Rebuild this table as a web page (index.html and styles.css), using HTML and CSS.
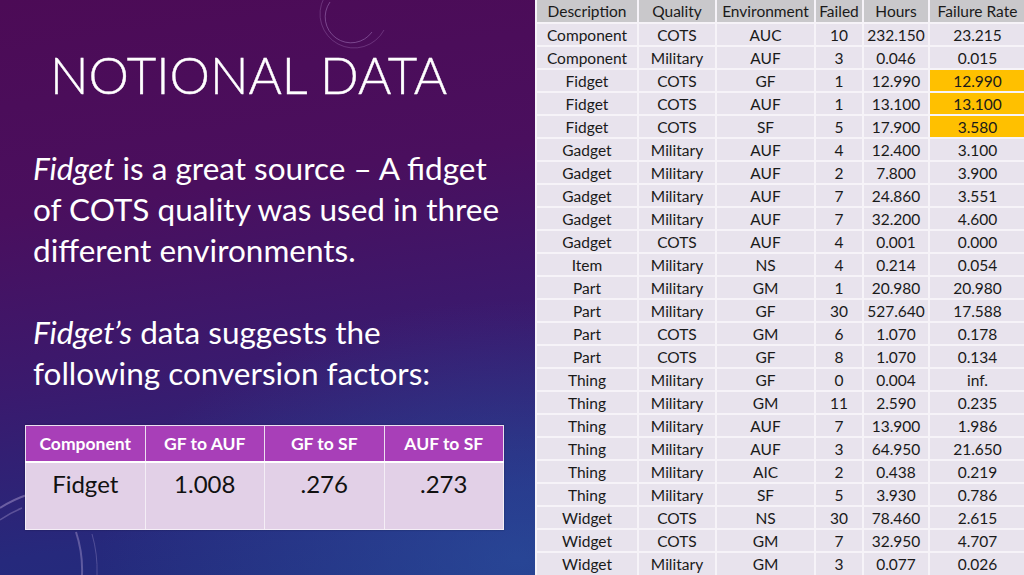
FILE: index.html
```html
<!DOCTYPE html>
<html lang="en">
<head>
<meta charset="utf-8">
<title>Notional Data</title>
<link rel="stylesheet" href="styles.css">
</head>
<body>
<div class="slide">
  <section class="left">
    <svg class="deco" width="535" height="575" viewBox="0 0 535 575">
      <path d="M330 2 A24 24 0 0 0 372 32" fill="none" stroke="#9a6cb0" stroke-width="1" opacity="0.6"/>
      <path d="M324 -2 A30 30 0 0 0 384 30" fill="none" stroke="#9a6cb0" stroke-width="1" opacity="0.4"/>
      <path d="M0 508 A120 120 0 0 1 30 494" fill="none" stroke="#b7a6d8" stroke-width="2" opacity="0.45"/>
      <path d="M0 520 A110 110 0 0 1 22 508" fill="none" stroke="#b7a6d8" stroke-width="1.5" opacity="0.35"/>
      <path d="M76 532 A120 120 0 0 1 82 575" fill="none" stroke="#b7a6d8" stroke-width="2" opacity="0.4"/>
      <path d="M92 534 A130 130 0 0 1 97 575" fill="none" stroke="#b7a6d8" stroke-width="1" opacity="0.3"/>
    </svg>
    <h1 class="title">NOTIONAL DATA</h1>
    <p class="body-text"><em>Fidget</em> is a great source – A fidget of COTS quality was used in three different environments.</p>
    <p class="body-text second"><em>Fidget’s</em> data suggests the following conversion factors:</p>
    <table class="conv">
      <thead>
        <tr><th>Component</th><th>GF to AUF</th><th>GF to SF</th><th>AUF to SF</th></tr>
      </thead>
      <tbody>
        <tr><td>Fidget</td><td>1.008</td><td>.276</td><td>.273</td></tr>
      </tbody>
    </table>
  </section>
  <section class="right">
    <table class="data">
      <colgroup>
        <col class="c1"><col class="c2"><col class="c3"><col class="c4"><col class="c5"><col class="c6">
      </colgroup>
      <thead>
        <tr><th>Description</th><th>Quality</th><th>Environment</th><th>Failed</th><th>Hours</th><th>Failure Rate</th></tr>
      </thead>
      <tbody>
        <tr><td>Component</td><td>COTS</td><td>AUC</td><td>10</td><td>232.150</td><td>23.215</td></tr>
        <tr><td>Component</td><td>Military</td><td>AUF</td><td>3</td><td>0.046</td><td>0.015</td></tr>
        <tr><td>Fidget</td><td>COTS</td><td>GF</td><td>1</td><td>12.990</td><td class="hl">12.990</td></tr>
        <tr><td>Fidget</td><td>COTS</td><td>AUF</td><td>1</td><td>13.100</td><td class="hl">13.100</td></tr>
        <tr><td>Fidget</td><td>COTS</td><td>SF</td><td>5</td><td>17.900</td><td class="hl">3.580</td></tr>
        <tr><td>Gadget</td><td>Military</td><td>AUF</td><td>4</td><td>12.400</td><td>3.100</td></tr>
        <tr><td>Gadget</td><td>Military</td><td>AUF</td><td>2</td><td>7.800</td><td>3.900</td></tr>
        <tr><td>Gadget</td><td>Military</td><td>AUF</td><td>7</td><td>24.860</td><td>3.551</td></tr>
        <tr><td>Gadget</td><td>Military</td><td>AUF</td><td>7</td><td>32.200</td><td>4.600</td></tr>
        <tr><td>Gadget</td><td>COTS</td><td>AUF</td><td>4</td><td>0.001</td><td>0.000</td></tr>
        <tr><td>Item</td><td>Military</td><td>NS</td><td>4</td><td>0.214</td><td>0.054</td></tr>
        <tr><td>Part</td><td>Military</td><td>GM</td><td>1</td><td>20.980</td><td>20.980</td></tr>
        <tr><td>Part</td><td>Military</td><td>GF</td><td>30</td><td>527.640</td><td>17.588</td></tr>
        <tr><td>Part</td><td>COTS</td><td>GM</td><td>6</td><td>1.070</td><td>0.178</td></tr>
        <tr><td>Part</td><td>COTS</td><td>GF</td><td>8</td><td>1.070</td><td>0.134</td></tr>
        <tr><td>Thing</td><td>Military</td><td>GF</td><td>0</td><td>0.004</td><td>inf.</td></tr>
        <tr><td>Thing</td><td>Military</td><td>GM</td><td>11</td><td>2.590</td><td>0.235</td></tr>
        <tr><td>Thing</td><td>Military</td><td>AUF</td><td>7</td><td>13.900</td><td>1.986</td></tr>
        <tr><td>Thing</td><td>Military</td><td>AUF</td><td>3</td><td>64.950</td><td>21.650</td></tr>
        <tr><td>Thing</td><td>Military</td><td>AIC</td><td>2</td><td>0.438</td><td>0.219</td></tr>
        <tr><td>Thing</td><td>Military</td><td>SF</td><td>5</td><td>3.930</td><td>0.786</td></tr>
        <tr><td>Widget</td><td>COTS</td><td>NS</td><td>30</td><td>78.460</td><td>2.615</td></tr>
        <tr><td>Widget</td><td>COTS</td><td>GM</td><td>7</td><td>32.950</td><td>4.707</td></tr>
        <tr><td>Widget</td><td>Military</td><td>GM</td><td>3</td><td>0.077</td><td>0.026</td></tr>
      </tbody>
    </table>
  </section>
</div>
</body>
</html>
```
FILE: styles.css
```css
html, body {
  margin: 0;
  padding: 0;
}
body {
  width: 1024px;
  height: 575px;
  overflow: hidden;
  font-family: Lato, "Open Sans", sans-serif;
}
.slide {
  display: flex;
  width: 1024px;
  height: 575px;
  background:
    radial-gradient(ellipse 420px 260px at 520px 560px, rgba(45, 90, 170, 0.55), rgba(45, 90, 170, 0) 100%),
    linear-gradient(172deg, #4c0b56 0%, #4a0f5e 30%, #3a1a6e 55%, #26297c 78%, #1d2f7c 100%);
}
.left {
  position: relative;
  width: 535px;
  flex: 0 0 535px;
  color: #ffffff;
  box-sizing: border-box;
  padding: 45px 0 0 33px;
}
.deco {
  position: absolute;
  left: 0;
  top: 0;
  pointer-events: none;
}
.title {
  position: relative;
  margin: 0 0 0 17px;
  font-weight: 300;
  font-size: 51px;
  line-height: 60px;
  letter-spacing: 0;
  -webkit-text-stroke: 0.4px #ffffff;
}
.body-text {
  position: relative;
  margin: 43px 0 0 0;
  font-size: 31.5px;
  line-height: 41px;
  width: 482px;
}
.body-text em {
  font-style: italic;
}
.body-text.second {
  margin-top: 41px;
}
.conv {
  position: relative;
  margin: 31px 0 0 -8px;
  width: 479px;
  border-collapse: collapse;
  table-layout: fixed;
  box-shadow: 0 0 2px rgba(0,0,0,0.3);
}
.conv th {
  background: #a83fb8;
  color: #ffffff;
  font-weight: 700;
  font-size: 17.5px;
  height: 35px;
  padding: 0;
  border: 1px solid #ece0f0;
  border-bottom: 2px solid #ffffff;
}
.conv td {
  background: #e2d0e7;
  color: #111111;
  font-size: 24px;
  height: 60px;
  padding: 6px 0 0 0;
  vertical-align: top;
  text-align: center;
  border: 1px solid #f4eef6;
}
.right {
  width: 489px;
  flex: 0 0 489px;
}
.data {
  width: 489px;
  border-collapse: collapse;
  table-layout: fixed;
  font-size: 15.5px;
  color: #1a1a1a;
}
.data .c1 { width: 102px; }
.data .c2 { width: 78px; }
.data .c3 { width: 99px; }
.data .c4 { width: 48px; }
.data .c5 { width: 66px; }
.data .c6 { width: 96px; }
.data th, .data td {
  height: 23px;
  padding: 0;
  text-align: center;
  border: 2px solid #f6f3f8;
  white-space: nowrap;
  box-sizing: border-box;
}
.data th {
  background: #c9c8cb;
  font-weight: 400;
}
.data td {
  background: #e8e3ed;
}
.data td.hl {
  background: #ffc000;
}
.data tr:first-child th { border-top: 0; }
.data tr th:last-child, .data tr td:last-child { border-right: 0; }
.data tr:last-child td { border-bottom: 0; }
```
